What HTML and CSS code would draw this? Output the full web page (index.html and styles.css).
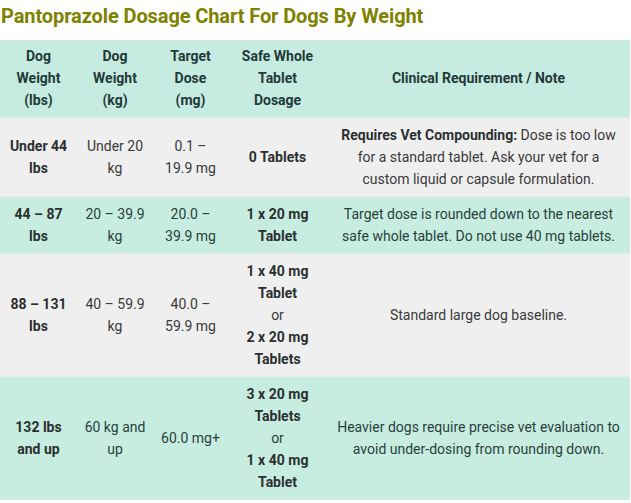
FILE: index.html
```html
<!DOCTYPE html>
<html lang="en">
<head>
<meta charset="utf-8">
<title>Pantoprazole Dosage Chart For Dogs By Weight</title>
<link rel="stylesheet" href="styles.css">
</head>
<body>
<h2 class="title">Pantoprazole Dosage Chart For Dogs By Weight</h2>
<table class="chart">
  <colgroup>
    <col class="c1"><col class="c2"><col class="c3"><col class="c4"><col class="c5">
  </colgroup>
  <thead>
    <tr>
      <th>Dog Weight (lbs)</th>
      <th>Dog Weight (kg)</th>
      <th>Target Dose (mg)</th>
      <th>Safe Whole Tablet Dosage</th>
      <th>Clinical Requirement / Note</th>
    </tr>
  </thead>
  <tbody>
    <tr class="grey">
      <td><strong>Under 44 lbs</strong></td>
      <td>Under 20 kg</td>
      <td>0.1 – 19.9 mg</td>
      <td><strong>0 Tablets</strong></td>
      <td><strong>Requires Vet Compounding:</strong> Dose is too low for a standard tablet. Ask your vet for a custom liquid or capsule formulation.</td>
    </tr>
    <tr class="mint">
      <td><strong>44 – 87 lbs</strong></td>
      <td>20 – 39.9 kg</td>
      <td>20.0 – 39.9 mg</td>
      <td><strong>1 x 20 mg Tablet</strong></td>
      <td>Target dose is rounded down to the nearest safe whole tablet. Do not use 40 mg tablets.</td>
    </tr>
    <tr class="grey">
      <td><strong>88 – 131 lbs</strong></td>
      <td>40 – 59.9 kg</td>
      <td>40.0 – 59.9 mg</td>
      <td><strong>1 x 40 mg Tablet</strong><br>or<br><strong>2 x 20 mg Tablets</strong></td>
      <td>Standard large dog baseline.</td>
    </tr>
    <tr class="mint">
      <td><strong>132 lbs and up</strong></td>
      <td>60 kg and up</td>
      <td>60.0 mg+</td>
      <td><strong>3 x 20 mg Tablets</strong><br>or<br><strong>1 x 40 mg Tablet</strong></td>
      <td>Heavier dogs require precise vet evaluation to avoid under-dosing from rounding down.</td>
    </tr>
  </tbody>
</table>
</body>
</html>
```
FILE: styles.css
```css
html, body {
  margin: 0;
  padding: 0;
  background: #ffffff;
}
body {
  font-family: Roboto, "Liberation Sans", Arial, sans-serif;
  color: #333333;
}
.title {
  margin: 0;
  padding: 3px 0 0 1px;
  height: 40px;
  box-sizing: border-box;
  font-size: 20px;
  line-height: 26px;
  font-weight: 700;
  color: #7d8200;
  letter-spacing: -0.1px;
}
.chart {
  width: 630px;
  border-collapse: collapse;
  table-layout: fixed;
  font-size: 14px;
  line-height: 22px;
  text-align: center;
}
.c1 { width: 77px; }
.c2 { width: 76px; }
.c3 { width: 75px; }
.c4 { width: 99px; }
.chart th, .chart td {
  padding: 6px 8px;
  vertical-align: middle;
}
.chart td:nth-child(2) {
  padding-left: 6px;
  padding-right: 6px;
}
.chart th {
  background: #c6ebe0;
  color: #1f3a38;
  font-weight: 700;
  padding-top: 5px;
  padding-bottom: 6px;
}
.chart td {
  border-top: 1px solid #e6ecea;
}
.chart td strong {
  font-weight: 700;
  color: #2b2f2f;
}
.grey td {
  background: #efefef;
  color: #3a3a3a;
}
.mint td {
  background: #c6ede0;
  color: #2a3f3c;
}
.chart tbody tr:last-child td {
  border-bottom: 1px solid #dde5e2;
}
```
